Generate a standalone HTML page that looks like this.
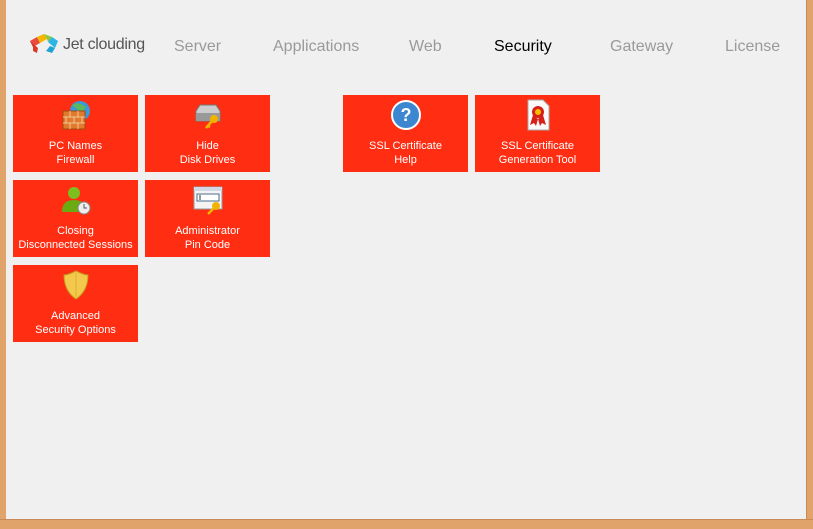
<!DOCTYPE html>
<html><head><style>
body{margin:0;width:813px;height:528px;background:#f0f0f0;position:relative;overflow:hidden;font-family:"Liberation Sans",sans-serif}
.bl{position:absolute;left:0;top:0;width:6px;height:528px;background:#e0a36a}
.br{position:absolute;left:806px;top:0;width:7px;height:528px;background:#e0a36a;border-left:1px solid #c98a55}
.bb{position:absolute;left:0;top:519px;width:813px;height:9px;background:#e0a36a;border-top:1px solid #c98a55}
.nav{position:absolute;top:38px;font-size:16px;color:#9a9a9a}
.t{position:absolute;width:125px;height:77px;background:#ff2d12;color:#fff;font-size:11px;text-align:center}
.t .tx{position:absolute;top:44px;left:0;width:100%;line-height:14px}
.t svg{position:absolute;left:47px;top:4px}
</style></head><body>
<div class="bl"></div><div class="br"></div><div class="bb"></div>
<svg style="position:absolute;left:28px;top:33px" width="32" height="22" viewBox="0 0 32 22">
<path d="M2 8 L9 4 L12 10 L5 14Z" fill="#e94b3c"/><path d="M9 4 L16 1 L19 6 L12 10Z" fill="#f7b500"/><path d="M16 1 L24 4 L20 9 L19 6Z" fill="#8cc63f"/><path d="M24 4 L30 8 L27 15 L20 9Z" fill="#2db5e6"/><path d="M2 8 L5 14 L5 18 L9 20 L10 15Z" fill="#d63a2f"/><path d="M27 15 L24 20 L18 18 L22 13Z" fill="#1fa3d4"/></svg>
<div style="position:absolute;left:63px;top:36px;font-size:16px;letter-spacing:-0.3px;color:#555">Jet clouding</div>
<div class="nav" style="left:174px">Server</div>
<div class="nav" style="left:273px">Applications</div>
<div class="nav" style="left:409px">Web</div>
<div class="nav" style="left:494px;color:#000">Security</div>
<div class="nav" style="left:610px">Gateway</div>
<div class="nav" style="left:725px">License</div>

<div class="t" style="left:13px;top:95px"><svg width="32" height="32"><circle cx="20" cy="12" r="10" fill="#3a9ad9"/><path d="M12 6 q6 -4 14 2 l-4 6z" fill="#5cb85c"/><rect x="3" y="12" width="22" height="18" fill="#e07a2c" stroke="#a04a10"/><path d="M3 18h22M3 24h22M10 12v6M18 12v6M6 18v6M14 18v6M22 18v6M10 24v6M18 24v6" stroke="#f5c79a"/></svg><div class="tx">PC Names<br>Firewall</div></div>
<div class="t" style="left:145px;top:95px"><svg width="32" height="32"><path d="M4 12 l4 -6 h16 l4 6 v10 h-24z" fill="#ccc" stroke="#777"/><rect x="4" y="14" width="24" height="8" fill="#999"/><circle cx="22" cy="20" r="4" fill="#f0b400"/><path d="M20 22 l-6 7 M16 27 l2 1" stroke="#f0b400" stroke-width="2.5"/></svg><div class="tx">Hide<br>Disk Drives</div></div>
<div class="t" style="left:13px;top:180px"><svg width="32" height="32"><circle cx="14" cy="9" r="6" fill="#7cbf1e"/><path d="M2 28 q0 -12 12 -12 q12 0 12 12z" fill="#6aab12"/><circle cx="24" cy="24" r="6" fill="#eee" stroke="#888"/><path d="M24 20v4h3" stroke="#555" fill="none"/></svg><div class="tx">Closing<br>Disconnected Sessions</div></div>
<div class="t" style="left:145px;top:180px"><svg width="32" height="32"><rect x="2" y="3" width="28" height="22" fill="#f4f4f4" stroke="#999"/><rect x="2" y="3" width="28" height="4" fill="#cfd8e4"/><rect x="5" y="10" width="22" height="7" fill="#fff" stroke="#4a6b8a"/><path d="M8 11v5" stroke="#333"/><circle cx="24" cy="22" r="4" fill="#f0b400"/><path d="M22 24 l-6 6" stroke="#f0b400" stroke-width="2.5"/></svg><div class="tx">Administrator<br>Pin Code</div></div>
<div class="t" style="left:13px;top:265px"><svg width="32" height="32"><path d="M16 2 q8 4 12 4 q0 16 -12 24 q-12 -8 -12 -24 q4 0 12 -4z" fill="#f2c94c" stroke="#c99a1a"/><path d="M16 4 v24" stroke="#e0b030"/></svg><div class="tx">Advanced<br>Security Options</div></div>
<div class="t" style="left:343px;top:95px"><svg width="32" height="32"><circle cx="16" cy="16" r="14" fill="#3d86d0" stroke="#fff" stroke-width="2"/><text x="16" y="22" font-size="18" font-weight="bold" fill="#fff" text-anchor="middle" font-family="Liberation Sans">?</text></svg><div class="tx">SSL Certificate<br>Help</div></div>
<div class="t" style="left:475px;top:95px"><svg width="32" height="32"><path d="M6 1 h15 l6 6 v24 h-21z" fill="#fafafa" stroke="#aaa"/><path d="M11 16 l-3 10 l4 -2 l2 3 l2 -7z M21 16 l3 10 l-4 -2 l-2 3 l-2 -7z" fill="#d8201a"/><circle cx="16" cy="13" r="6" fill="#d8201a"/><circle cx="16" cy="13" r="3" fill="#f5c000"/></svg><div class="tx">SSL Certificate<br>Generation Tool</div></div>
</body></html>
